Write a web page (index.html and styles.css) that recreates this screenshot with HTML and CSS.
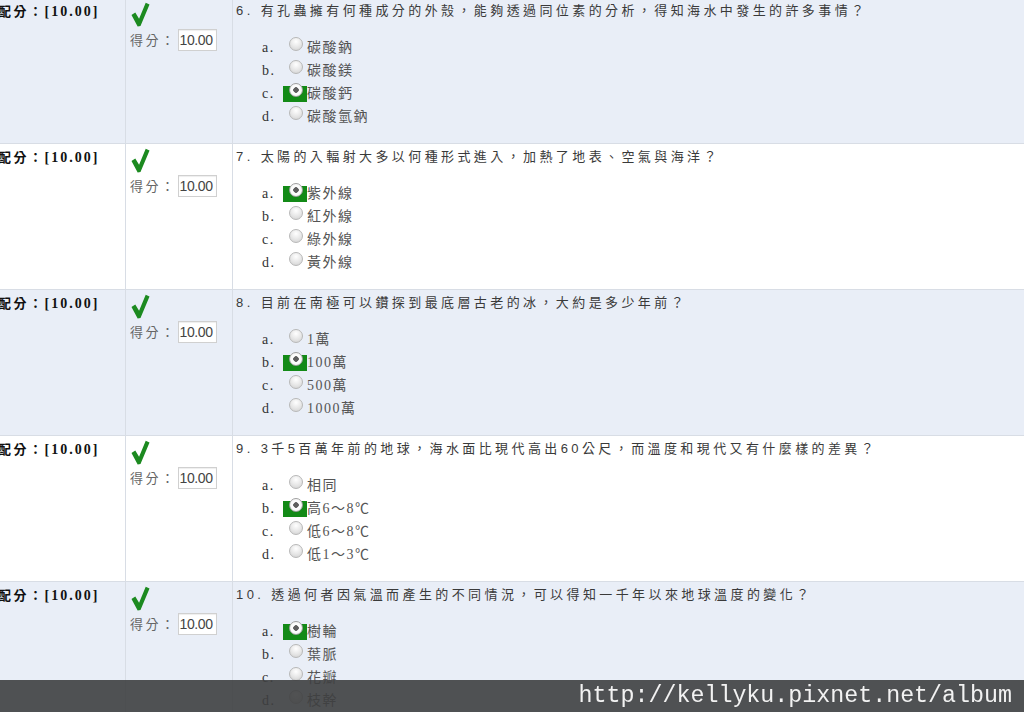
FILE: index.html
```html
<html>
<head>
	<title>測驗結果</title>
	<meta charset="utf-8" />
	<link rel="stylesheet" href="styles.css">
</head>
<body>
	<div class="list">
		<div class="row shade">
			<div class="cell score"><span class="score-label">配分：</span><b>[10.00]</b></div>
			<div class="cell grade">
				<svg class="check" viewBox="0 0 20 26"><path d="M0.5 13.5 L4.5 11 L8.5 17.5 L15.5 0.5 L19.5 2.5 L10 25 L7 25.5 Z" /></svg>
				<div class="got"><span>得分：</span><span class="got-box">10.00</span></div>
			</div>
			<div class="cell quiz">
				<div class="question">6. 有孔蟲擁有何種成分的外殼，能夠透過同位素的分析，得知海水中發生的許多事情？</div>
				<div class="options">
					<div class="opt"><span class="key">a.</span><span class="pick"><span class="radio"></span></span><span>碳酸鈉</span></div>
					<div class="opt"><span class="key">b.</span><span class="pick"><span class="radio"></span></span><span>碳酸鎂</span></div>
					<div class="opt"><span class="key">c.</span><span class="pick on"><span class="radio"></span></span><span>碳酸鈣</span></div>
					<div class="opt"><span class="key">d.</span><span class="pick"><span class="radio"></span></span><span>碳酸氫鈉</span></div>
				</div>
			</div>
		</div>
		<div class="row">
			<div class="cell score"><span class="score-label">配分：</span><b>[10.00]</b></div>
			<div class="cell grade">
				<svg class="check" viewBox="0 0 20 26"><path d="M0.5 13.5 L4.5 11 L8.5 17.5 L15.5 0.5 L19.5 2.5 L10 25 L7 25.5 Z" /></svg>
				<div class="got"><span>得分：</span><span class="got-box">10.00</span></div>
			</div>
			<div class="cell quiz">
				<div class="question">7. 太陽的入輻射大多以何種形式進入，加熱了地表、空氣與海洋？</div>
				<div class="options">
					<div class="opt"><span class="key">a.</span><span class="pick on"><span class="radio"></span></span><span>紫外線</span></div>
					<div class="opt"><span class="key">b.</span><span class="pick"><span class="radio"></span></span><span>紅外線</span></div>
					<div class="opt"><span class="key">c.</span><span class="pick"><span class="radio"></span></span><span>綠外線</span></div>
					<div class="opt"><span class="key">d.</span><span class="pick"><span class="radio"></span></span><span>黃外線</span></div>
				</div>
			</div>
		</div>
		<div class="row shade">
			<div class="cell score"><span class="score-label">配分：</span><b>[10.00]</b></div>
			<div class="cell grade">
				<svg class="check" viewBox="0 0 20 26"><path d="M0.5 13.5 L4.5 11 L8.5 17.5 L15.5 0.5 L19.5 2.5 L10 25 L7 25.5 Z" /></svg>
				<div class="got"><span>得分：</span><span class="got-box">10.00</span></div>
			</div>
			<div class="cell quiz">
				<div class="question">8. 目前在南極可以鑽探到最底層古老的冰，大約是多少年前？</div>
				<div class="options">
					<div class="opt"><span class="key">a.</span><span class="pick"><span class="radio"></span></span><span>1萬</span></div>
					<div class="opt"><span class="key">b.</span><span class="pick on"><span class="radio"></span></span><span>100萬</span></div>
					<div class="opt"><span class="key">c.</span><span class="pick"><span class="radio"></span></span><span>500萬</span></div>
					<div class="opt"><span class="key">d.</span><span class="pick"><span class="radio"></span></span><span>1000萬</span></div>
				</div>
			</div>
		</div>
		<div class="row">
			<div class="cell score"><span class="score-label">配分：</span><b>[10.00]</b></div>
			<div class="cell grade">
				<svg class="check" viewBox="0 0 20 26"><path d="M0.5 13.5 L4.5 11 L8.5 17.5 L15.5 0.5 L19.5 2.5 L10 25 L7 25.5 Z" /></svg>
				<div class="got"><span>得分：</span><span class="got-box">10.00</span></div>
			</div>
			<div class="cell quiz">
				<div class="question">9. 3千5百萬年前的地球，海水面比現代高出60公尺，而溫度和現代又有什麼樣的差異？</div>
				<div class="options">
					<div class="opt"><span class="key">a.</span><span class="pick"><span class="radio"></span></span><span>相同</span></div>
					<div class="opt"><span class="key">b.</span><span class="pick on"><span class="radio"></span></span><span>高6～8℃</span></div>
					<div class="opt"><span class="key">c.</span><span class="pick"><span class="radio"></span></span><span>低6～8℃</span></div>
					<div class="opt"><span class="key">d.</span><span class="pick"><span class="radio"></span></span><span>低1～3℃</span></div>
				</div>
			</div>
		</div>
		<div class="row shade">
			<div class="cell score"><span class="score-label">配分：</span><b>[10.00]</b></div>
			<div class="cell grade">
				<svg class="check" viewBox="0 0 20 26"><path d="M0.5 13.5 L4.5 11 L8.5 17.5 L15.5 0.5 L19.5 2.5 L10 25 L7 25.5 Z" /></svg>
				<div class="got"><span>得分：</span><span class="got-box">10.00</span></div>
			</div>
			<div class="cell quiz">
				<div class="question">10. 透過何者因氣溫而產生的不同情況，可以得知一千年以來地球溫度的變化？</div>
				<div class="options">
					<div class="opt"><span class="key">a.</span><span class="pick on"><span class="radio"></span></span><span>樹輪</span></div>
					<div class="opt"><span class="key">b.</span><span class="pick"><span class="radio"></span></span><span>葉脈</span></div>
					<div class="opt"><span class="key">c.</span><span class="pick"><span class="radio"></span></span><span>花瓣</span></div>
					<div class="opt"><span class="key">d.</span><span class="pick"><span class="radio"></span></span><span>枝幹</span></div>
				</div>
			</div>
		</div>
	</div>
	<div class="watermark">http://kellyku.pixnet.net/album</div>
</body>
</html>
```

FILE: styles.css
```css
body {
	margin: 0;
	background-color: #ffffff;
	font-family: "Liberation Serif", "Noto Sans CJK TC", serif;
	font-size: 13px;
	color: #333;
	overflow: hidden;
}

.list {
	margin-top: -2px;
}

.row {
	display: grid;
	grid-template-columns: 126px 107px 1fr;
	height: 146px;
	box-sizing: border-box;
	border-bottom: 1px solid #d8dde5;
	background-color: #ffffff;
}
.row.shade {
	background-color: #e9eef7;
}

.cell {
	border-right: 1px solid #d8dde5;
	padding-top: 4px;
	line-height: 18px;
}
.cell:last-child {
	border-right: none;
}

/* score column */
.score {
	color: #111;
	font-size: 14px;
	font-weight: bold;
	letter-spacing: 2px;
	text-indent: -2px;
	white-space: nowrap;
}
.score-label {
	font-family: "Noto Sans CJK TC", sans-serif;
	font-size: 13px;
	font-weight: bold;
	letter-spacing: 2.5px;
}

/* grade column */
.grade {
	padding-left: 4px;
}
.check {
	display: block;
	width: 19px;
	height: 25px;
	margin-left: 1px;
	fill: #1c8a20;
}
.got {
	display: flex;
	align-items: center;
	margin-top: 2px;
	font-family: "Noto Sans CJK TC", sans-serif;
	color: #666;
	letter-spacing: 2.5px;
}
.got-box {
	display: inline-block;
	width: 36px;
	height: 20px;
	line-height: 20px;
	margin-left: 1px;
	padding-left: 1px;
	border: 1px solid #d0d0d0;
	background-color: #fff;
	font-family: "Liberation Sans", sans-serif;
	font-size: 14px;
	color: #444;
	letter-spacing: -0.4px;
	box-shadow: inset 0 1px 1px #eee;
}

/* question column */
.quiz {
	padding-left: 3px;
}
.question {
	font-family: "Liberation Sans", "Noto Sans CJK TC", sans-serif;
	color: #3a3a3a;
	letter-spacing: 3.4px;
	white-space: nowrap;
}
.options {
	margin-top: 16px;
	margin-left: 26px;
	font-size: 14px;
	color: #555;
	letter-spacing: 1.5px;
}
.opt {
	display: flex;
	align-items: center;
	height: 23px;
}
.key {
	width: 21px;
	color: #333;
}
.pick {
	display: flex;
	align-items: flex-start;
	width: 24px;
	height: 16px;
	box-sizing: border-box;
	padding-left: 6px;
}
.pick.on {
	background-color: #138a17;
}
.radio {
	display: block;
	width: 14px;
	height: 14px;
	margin-top: -3px;
	box-sizing: border-box;
	border-radius: 50%;
	border: 1px solid #b8b8b8;
	background: radial-gradient(circle at 50% 30%, #ffffff 0%, #e6e6e6 55%, #cfcfcf 100%);
}
.pick.on .radio {
	border-color: #a0a0a0;
	background: radial-gradient(circle, #5e5e5e 0, #5e5e5e 2.5px, #ffffff 3px, #f0f0f0 100%);
}

/* watermark overlay */
.watermark {
	position: fixed;
	left: 0;
	right: 0;
	bottom: 0;
	height: 32px;
	line-height: 32px;
	padding-right: 12px;
	text-align: right;
	background-color: rgba(62, 63, 64, 0.9);
	font-family: "Liberation Mono", monospace;
	font-size: 23.3px;
	color: #f2f2f2;
}
```
